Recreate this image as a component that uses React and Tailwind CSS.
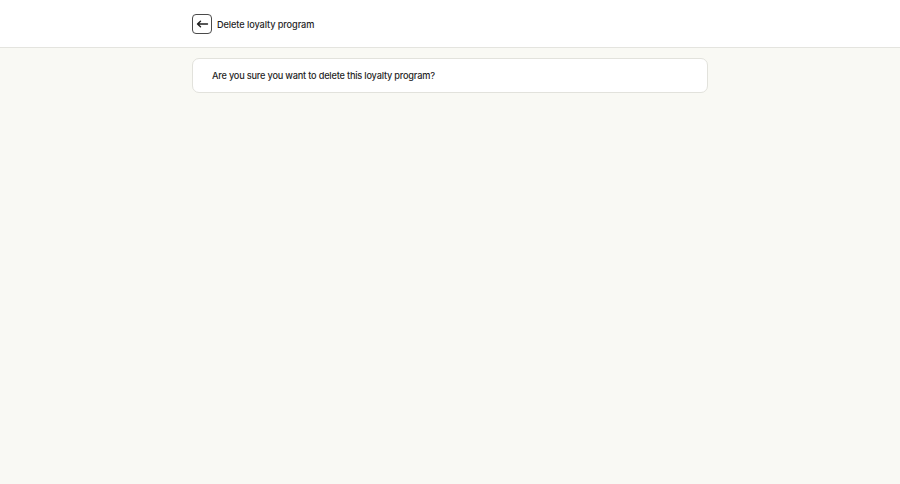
import React from "react";

const App = () => {
    return (
        <div className="min-h-screen bg-[#f9f9f4] font-['Inter',sans-serif] text-[#1f1f1f]">
            <header className="h-[48px] bg-white border-b border-[#e4e4df]">
                <div className="w-[516px] mx-auto h-full flex items-center gap-[5px]">
                    <button className="w-[20px] h-[20px] flex items-center justify-center border border-[#4a4a4a] rounded-[4px] bg-white">
                        <svg width="13" height="12" viewBox="0 0 13 12" fill="none" stroke="#1f1f1f" strokeWidth="1.4" strokeLinecap="round" strokeLinejoin="round">
                            <path d="M11.5 6H1.5M4.5 3.2L1.5 6l3 2.8" />
                        </svg>
                    </button>
                    <h1 className="text-[9.2px] font-medium tracking-[-0.1px] pt-[2px]">Delete loyalty program</h1>
                </div>
            </header>
            <main className="w-[516px] mx-auto pt-[10px]">
                <div className="h-[35px] bg-white border border-[#e2e2dc] rounded-[7px] px-[19px] flex items-center">
                    <p className="text-[9.2px] font-medium tracking-[-0.2px]">Are you sure you want to delete this loyalty program?</p>
                </div>
            </main>
        </div>
    );
};

export default App;
